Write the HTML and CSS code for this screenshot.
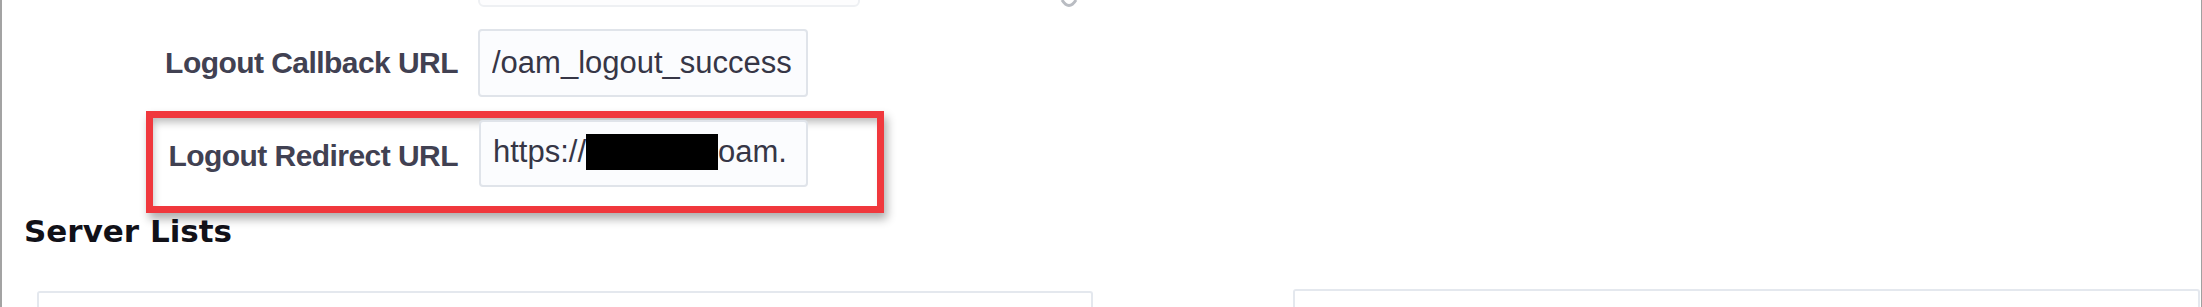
FILE: index.html
```html
<!DOCTYPE html>
<html lang="en">
<head>
<meta charset="utf-8">
<title>Logout settings</title>
<link rel="stylesheet" href="styles.css">
</head>
<body>
<div class="frame">
  <div class="stub-row">
    <div class="stub"></div>
    <svg class="chev" width="18" height="9" viewBox="0 0 18 9"><path d="M2 0 Q9 11 16 0" fill="none" stroke="#b9bcc2" stroke-width="3"/></svg>
  </div>

  <div class="field">
    <div class="label label-wide">Logout Callback URL</div>
    <div class="input input-first"><span class="input-text">/oam_logout_success</span></div>
  </div>

  <div class="highlight">
    <div class="label label-narrow">Logout Redirect URL</div>
    <div class="input input-second"><span class="input-text">https://<span class="redact"></span>oam.</span></div>
  </div>

  <h2 class="section-title">Server Lists</h2>

  <div class="lists">
    <div class="list-box list-left"></div>
    <div class="list-box list-right"></div>
  </div>
</div>
</body>
</html>
```

FILE: styles.css
```css
html, body {
  margin: 0;
  padding: 0;
  background: #ffffff;
}

body {
  font-family: "Liberation Sans", Arial, sans-serif;
  width: 2202px;
  height: 307px;
  overflow: hidden;
}

.frame {
  box-sizing: border-box;
  width: 2202px;
  height: 307px;
  border-left: 2px solid #a3a3a3;
  border-right: 1px solid #a0a0a0;
  overflow: hidden;
}

.stub-row {
  display: flex;
  align-items: flex-end;
  height: 7px;
}

.stub {
  flex: none;
  width: 382px;
  height: 40px;
  margin-left: 476px;
  box-sizing: border-box;
  border: 2px solid #eef0f3;
  border-radius: 6px;
  background: #fdfdfe;
}

.chev {
  flex: none;
  margin-left: 200px;
  align-self: flex-start;
}

.field {
  display: flex;
  align-items: center;
  margin-top: 22px;
}

.label {
  flex: none;
  text-align: right;
  font-weight: bold;
  font-size: 30px;
  letter-spacing: -0.55px;
  color: #414152;
  white-space: nowrap;
}

.label-wide {
  width: 456px;
}

.label-narrow {
  width: 305px;
}

.input {
  flex: none;
  box-sizing: border-box;
  display: flex;
  align-items: center;
  border: 2px solid #e0e4ea;
  border-radius: 4px;
  background: #fbfcfe;
  padding: 0 14px 0 12px;
  font-size: 31px;
  color: #363646;
}

.input-text {
  flex: 1;
  min-width: 0;
  display: flex;
  align-items: center;
  white-space: nowrap;
  overflow: hidden;
}

.input-first {
  width: 330px;
  height: 68px;
  margin-left: 20px;
}

.input-second {
  width: 329px;
  height: 67px;
  margin-left: 21px;
  padding-bottom: 4px;
}

.redact {
  flex: none;
  display: inline-block;
  width: 132px;
  height: 36px;
  background: #000000;
}

.highlight {
  box-sizing: border-box;
  display: flex;
  align-items: flex-start;
  width: 738px;
  height: 102px;
  margin-top: 14px;
  margin-left: 144px;
  padding-top: 2px;
  border: 7px solid #f0383d;
  box-shadow: 3px 6px 9px rgba(0, 0, 0, 0.32), inset 3px 7px 9px -3px rgba(0, 0, 0, 0.28);
}

.highlight .label {
  align-self: center;
  margin-top: -14px;
}

.section-title {
  margin: 3px 0 0 22px;
  font-family: "DejaVu Sans", Verdana, sans-serif;
  font-weight: bold;
  font-size: 31px;
  line-height: 31px;
  letter-spacing: 0;
  color: #111118;
}

.lists {
  display: flex;
  align-items: flex-start;
  margin-top: 44px;
}

.list-box {
  box-sizing: border-box;
  height: 40px;
  border: 2px solid #e4e8ee;
  border-bottom: none;
  border-radius: 3px 3px 0 0;
  background: #ffffff;
}

.list-left {
  flex: none;
  width: 1056px;
  margin-left: 35px;
}

.list-right {
  flex: 1;
  margin-left: 200px;
  margin-right: 1px;
  margin-top: -2px;
}
```
